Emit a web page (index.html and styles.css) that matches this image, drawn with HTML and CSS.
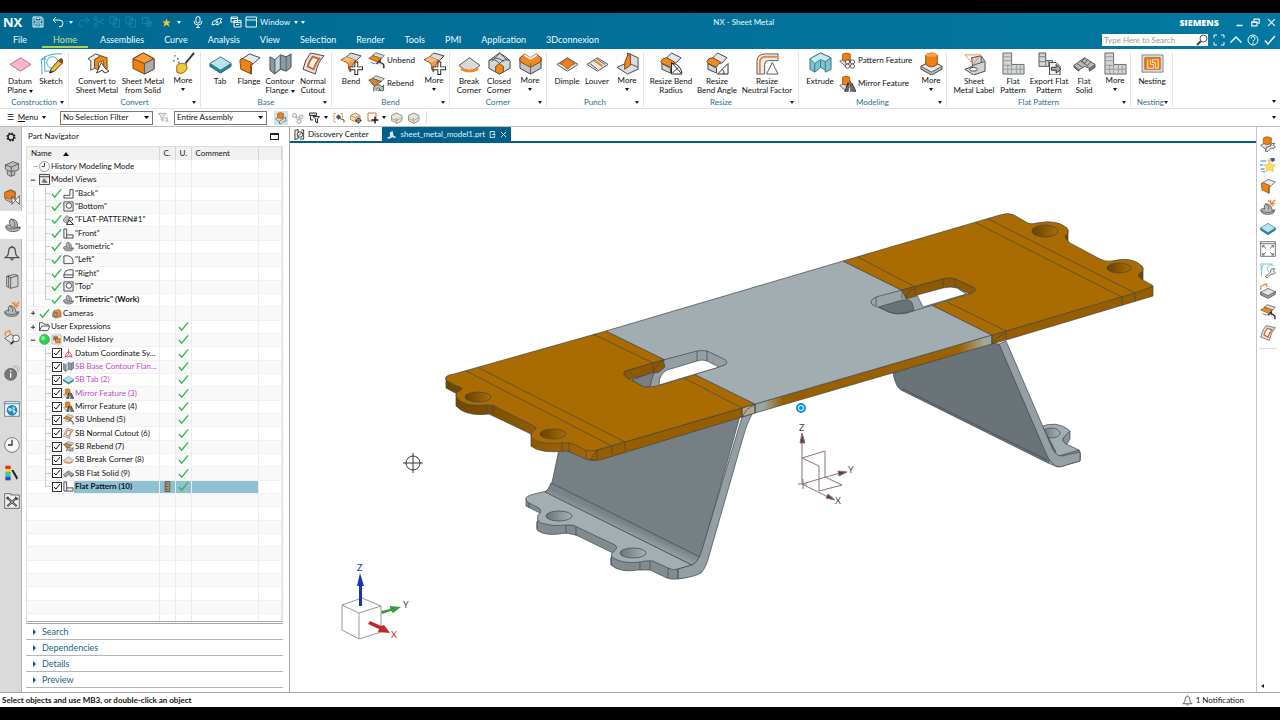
FILE: index.html
```
<!DOCTYPE html>
<html lang="en">
<head>
    <meta charset="UTF-8">
    <meta name="viewport" content="width=device-width, initial-scale=1.0">
    <title>NX - Sheet Metal</title>
    <link rel="stylesheet" href="styles.css">
</head>
<body>
    <!-- Shared icons, all on a 24 unit grid -->
    <svg class="sprite" aria-hidden="true">
        <symbol id="datum" viewBox="0 0 24 24"><path d="M1 13L12 6l11 7-11 7z" fill="#f7b6cf" stroke="#b5708f"/></symbol>
        <symbol id="sketch" viewBox="0 0 24 24"><g fill="none" stroke="#3ba6c4"><path d="M2 23Q2 10 1 8Q9 1 23 2M1 8l5-1M5 4v16h10"/><circle cx="13" cy="11" r="6"/></g><path d="M10 22l2-5L20 8l4 3-9 9z" fill="#f5b82e" stroke="#333"/><path d="M19 9l3-3 3 3-3 3z" fill="#8a4a2a"/><path d="M10 22l1-3 2 2z" fill="#222"/></symbol>
        <symbol id="convert" viewBox="0 0 24 24"><path d="M2 7l8-5 6 2-7 4v9l-4 2V9z" fill="#eee" stroke="#444"/><path d="M9 8l6-4 7 2v12l-4 3V9l-5 2v8l-4-2z" fill="#ef8a1d" stroke="#7a4a12"/><path d="M11 22l5-11 4 6 4 3-4 2-3-3z" fill="#fff" stroke="#333"/></symbol>
        <symbol id="solid" viewBox="0 0 24 24"><path d="M1 7l11-6 11 6v11l-10 5-12-6z" fill="#ee8012" stroke="#6b3f12"/><path d="M1 7l12 5 10-5-11-6z" fill="#f79a37" stroke="#6b3f12"/><path d="M13 12l10-5v11l-10 5z" fill="#b0aaa6" stroke="#555"/></symbol>
        <symbol id="broom" viewBox="0 0 24 24"><path d="M23 1l-9 11" stroke="#333" stroke-width="2"/><path d="M5 14q4-4 10-1 2 4-1 7-4 4-9 1z" fill="#f0c838" stroke="#87691d"/><g fill="#777"><circle cx="3" cy="4" r="1"/><circle cx="6" cy="7" r="1"/><circle cx="2" cy="9" r="1"/><circle cx="7" cy="11" r="1"/></g></symbol>
        <symbol id="tab" viewBox="0 0 24 24"><path d="M1 12l11 7 11-7v3l-11 7-11-7z" fill="#1f8aa0" stroke="#22616f"/><path d="M1 12l11-7 11 7-11 7z" fill="#b9e3ec" stroke="#347887"/></symbol>
        <symbol id="flange" viewBox="0 0 24 24"><path d="M3 8l9-6 11 4-8 7z" fill="#e6e8ea" stroke="#444"/><path d="M2 9q0-2 3-2l9 4q2 1 0 3v9L3 18z" fill="#ee8418" stroke="#7d4611"/><path d="M14 12l-1 3v8" fill="none" stroke="#7d4611"/></symbol>
        <symbol id="contour" viewBox="0 0 24 24"><path d="M1 5l5 3 6-5 6 2 5-3v14l-5 4-6-2-6 5-5-4z" fill="#8d9ba3" stroke="#3e4a50"/><path d="M6 8v15M12 3v15M18 5v15" stroke="#54626a"/><path d="M7 8l4-4v13l-4 4z" fill="#c8d2d7"/></symbol>
        <symbol id="cutout" viewBox="0 0 24 24"><path d="M9 1l14 3q-7 7-9 19L1 18Q3 8 9 1z" fill="#e3e3e3" stroke="#444"/><path d="M11 5l7 2q-4 5-6 11l-6-3q1-5 5-10z" fill="#fff" stroke="#d3602d" stroke-width="2"/></symbol>
        <symbol id="bend" viewBox="0 0 24 24"><path d="M6 6l5-5 11 3-6 6z" fill="#d9dcdd" stroke="#444"/><path d="M1 8l6-3 10 4-3 4q-3 3-3 8l-2-3q1-5-2-7z" fill="#ee9a48" stroke="#87501b"/><path d="M2 8l7 3 6-3-8-3z" fill="#f8bd79"/><path d="M17 10v14M10 17h14" stroke="#222" stroke-width="4"/><path d="M17 11v12M11 17h12" stroke="#fff" stroke-width="2"/></symbol>
        <symbol id="unbend" viewBox="0 0 24 24"><path d="M6 5l5-4 12 4-5 5z" fill="#d9dcdd" stroke="#444"/><path d="M1 9l6-4 12 4-6 5z" fill="#ee8a22" stroke="#7d4611"/><path d="M4 14l5 3 2-2" fill="none" stroke="#333"/><path d="M12 17l5-5v3q7 1 5 8" fill="#eee" stroke="#333" stroke-width="2"/></symbol>
        <symbol id="rebend" viewBox="0 0 24 24"><path d="M6 5l5-4 12 4-5 5z" fill="#d9dcdd" stroke="#444"/><path d="M1 7l6-2 12 4-5 3-2 5-5-3z" fill="#c9873e" stroke="#5e3914"/><path d="M8 23v-6q7-7 12 0l2-3v8h-8l3-2q-4-4-5 2" fill="#bbb" stroke="#333"/></symbol>
        <symbol id="breakc" viewBox="0 0 24 24"><path d="M1 14L12 6l11 8q-11 11-22 0z" fill="#d8dadb" stroke="#555"/><path d="M3 16q9 5 18 0v3q-9 5-18 0z" fill="#f08a22"/></symbol>
        <symbol id="closedc" viewBox="0 0 24 24"><path d="M1 9q4-3 11-8 7 4 11 8v8l-11 6-11-6z" fill="#d5d8da" stroke="#444"/><path d="M1 9q6-3 11 3 5-6 11-3M5 6q7 0 12 4M12 1q-2 3-8 9M12 1q5 4 8 8" fill="none" stroke="#555"/><path d="M8 15l4-3 4 3v6l-4 2-4-2z" fill="#ee8a1d" stroke="#7d4611"/></symbol>
        <symbol id="cmore" viewBox="0 0 24 24"><path d="M1 6l11 6 11-6v11l-11 6-11-6z" fill="#bfc3c5" stroke="#444"/><path d="M1 6l5-4 6 4 6-4 5 4v4l-11 6-11-6z" fill="#ee8a22" stroke="#7d4611"/><path d="M5 4l7 4 7-4-1-2-6 4-6-4z" fill="#eceeef"/><path d="M12 12v11" stroke="#666"/></symbol>
        <symbol id="dimple" viewBox="0 0 24 24"><path d="M1 13L12 6l11 7-11 7z" fill="#e6e6e6" stroke="#555"/><path d="M4 12q4-1 8-6 4 5 8 6-4 1-8 6-4-5-8-6z" fill="#f07e1b" stroke="#a75310"/></symbol>
        <symbol id="louver" viewBox="0 0 24 24"><path d="M1 13L12 6l11 7-11 7z" fill="#e8e8e8" stroke="#555"/><path d="M8 9l9 6M11 7l9 6M4 12l8 6" stroke="#555"/><path d="M8 9l2-1 8 6-2 1z" fill="#f08a22"/></symbol>
        <symbol id="pmore" viewBox="0 0 24 24"><path d="M12 1l11 5v12l-11 5-11-7 11-5z" fill="#dcdfe1" stroke="#444"/><path d="M12 11l11 5" stroke="#555"/><path d="M12 4l3-2v12l-6 4q-1-8 3-14z" fill="#ee8a22" stroke="#7d4611"/></symbol>
        <symbol id="rbr" viewBox="0 0 24 24"><path d="M7 6l5-5 10 5-6 6z" fill="#e2e4e5" stroke="#444"/><path d="M1 10q1-4 6-4l9 5q-4 1-5 5l-9-4z" fill="#f08a22" stroke="#7d4611"/><path d="M2 12l9 5v5l-9-4z" fill="#d0d2d3" stroke="#444"/><path d="M12 23V11l11 12z" fill="#fff" stroke="#222"/><path d="M12 12q9 0 11 10M13 22l6-6" fill="none" stroke="#222"/></symbol>
        <symbol id="rba" viewBox="0 0 24 24"><path d="M7 6l5-5 10 5-6 6z" fill="#e2e4e5" stroke="#444"/><path d="M1 10q1-4 6-4l9 5q-4 1-5 5l-9-4z" fill="#f08a22" stroke="#7d4611"/><path d="M2 12l9 5v5l-9-4z" fill="#d0d2d3" stroke="#444"/><path d="M12 23L23 12v11z" fill="#fff" stroke="#222"/><path d="M17 18q2 2 2 5" fill="none" stroke="#222"/></symbol>
        <symbol id="rnf" viewBox="0 0 24 24"><path d="M1 23V10q0-8 9-8h13v7H13q-4 0-4 4v10z" fill="#eee" stroke="#555"/><path d="M4 23V11q0-6 7-6h12" fill="none" stroke="#e98a3d" stroke-width="2"/><path d="M11 23l6-12 6 12z" fill="#fff" stroke="#555"/></symbol>
        <symbol id="extrude" viewBox="0 0 24 24"><path d="M1 7l11-6 11 5v12l-6 3v-2l-5-3-6 5-5-3z" fill="#7fc2d0" stroke="#39788a"/><path d="M1 7l11-6 11 5-6 4-5-2-6 4z" fill="#c7eaf0" stroke="#39788a"/><path d="M6 12v9M12 9v7M17 10v9" stroke="#39788a"/></symbol>
        <symbol id="boss" viewBox="0 0 24 24"><path d="M1 15l11-6 11 6v3l-11 6-11-6z" fill="#b8bcbe" stroke="#444"/><path d="M1 15l11-6 11 6-11 6z" fill="#e5e7e8" stroke="#555"/><path d="M6 3q6-4 12 0v10q-6 5-12 0z" fill="#ee7f14" stroke="#8c4b10"/><ellipse cx="12" cy="3" rx="6" ry="2" fill="#f8a445"/></symbol>
        <symbol id="patternf" viewBox="0 0 24 24"><path d="M1 13l8-5 8 5-8 7z" fill="#d8dadb" stroke="#444"/><path d="M5 3q5-3 11 0v9q-5 3-11 0z" fill="#ee7f14" stroke="#8c4b10"/><g fill="#fff" stroke="#222"><circle cx="12" cy="14" r="3"/><circle cx="19" cy="14" r="3"/><circle cx="12" cy="20" r="3"/><circle cx="19" cy="20" r="3"/></g></symbol>
        <symbol id="mirrorf" viewBox="0 0 24 24"><path d="M1 15l8-5 8 5-8 7z" fill="#d8dadb" stroke="#444"/><path d="M5 3q5-3 10 0v10q-5 3-10 0z" fill="#ee7f14" stroke="#8c4b10"/><path d="M8 23l5-12v12zM24 23l-6-12v12z" fill="#777" stroke="#111"/><path d="M16 8v16" stroke="#111"/></symbol>
        <symbol id="flatview" viewBox="0 0 24 24"><path d="M1 11l7-8 9 6v9l-9 2-7-4z" fill="#bbb" stroke="#333"/><path d="M8 23l5-10 10 10zM13 12a4 4 0 1 1 6 3" fill="#eee" stroke="#222" stroke-width="2"/></symbol>
        <symbol id="label" viewBox="0 0 24 24"><path d="M9 6l10-2 4 6v10l-12 4-9-6 8-3z" fill="#cfd3d5" stroke="#444"/><path d="M10 14l12-4M19 4v7" stroke="#555"/><ellipse cx="11" cy="18" rx="4" ry="2" fill="#fff" stroke="#444"/><path d="M2 3h16M2 3l9 10 7-10" fill="none" stroke="#e98a3d"/></symbol>
        <symbol id="flatp" viewBox="0 0 24 24"><path d="M1 1h9v12h13v10H1z" fill="#d3d6d8" stroke="#666"/><path d="M1 5h9M1 9h9M1 14h9M10 13v10M6 13v10M15 13v10M19 13v10M1 18h22" stroke="#999"/></symbol>
        <symbol id="exportfp" viewBox="0 0 24 24"><path d="M1 1h7v8h7v6H1z" fill="#d3d6d8" stroke="#555"/><path d="M1 5h7M8 9v6M1 10h7M11 9v6" stroke="#777"/><path d="M12 11h7l4 4v9H12z" fill="#f1f1f1" stroke="#444"/><path d="M14 16h5v-3l5 5-5 4v-3h-5z" fill="#aaa" stroke="#333"/></symbol>
        <symbol id="flatsolid" viewBox="0 0 24 24"><path d="M1 14l11-8 11 7-6 4-5-2-6 4z" fill="#b9bdc0" stroke="#555"/><path d="M4 12l6 4M8 9l8 6M12 6l-3 5M15 8l-4 5M19 10l-4 4" stroke="#555"/><path d="M1 14v2l5 4v-2M17 17v3l6-4v-3" fill="#777" stroke="#555"/></symbol>
        <symbol id="nesting" viewBox="0 0 24 24"><path d="M1 3h22v18H1z" fill="#d9d9d9" stroke="#888"/><path d="M4 6h16v12H4z" fill="#ee8418" stroke="#b0691d"/><path d="M10 8v5h3v4H7V8M15 8h3v9h-3v-6h-3V8z" fill="none" stroke="#fbe3c8"/></symbol>
        <symbol id="part" viewBox="0 0 24 24"><path d="M1 14q3-4 7-1Q5 5 9 3q11 0 10 13l4-1q0 7-12 7Q1 21 1 14z" fill="#b6b8b9" stroke="#333"/><path d="M9 3q8 4 5 12l5 1M1 15q8 6 22 0M8 13q1 4 6 2" fill="none" stroke="#444"/></symbol>
        <symbol id="tick" viewBox="0 0 24 24"><path d="M2 13l6 7L22 3" fill="none" stroke="#2cb84c" stroke-width="3"/></symbol>
        <symbol id="gear" viewBox="0 0 24 24"><circle cx="12" cy="12" r="9" fill="none" stroke="#222" stroke-width="4" stroke-dasharray="4 3"/><circle cx="12" cy="12" r="7" fill="none" stroke="#222" stroke-width="3"/></symbol>
        <symbol id="assembly" viewBox="0 0 24 24"><path d="M2 6l11-5 9 3v9l-6 3v5l-6 2-5-3v-6l-3-2z" fill="#bbbdbe" stroke="#333"/><path d="M2 6l9 3 11-5M11 9v6M5 14l6 2 5-2M11 15v8" fill="none" stroke="#333"/></symbol>
        <symbol id="constraint" viewBox="0 0 24 24"><path d="M2 5l8-4 7 3v11l-7 5-8-4z" fill="#bbb" stroke="#444"/><path d="M1 5l9-3 6 3v8l-7 2-8-2z" fill="#ef7c17" stroke="#8c4b10"/><path d="M12 11v12l5-6 6 6V10l-6 7z" fill="#fff" stroke="#222"/></symbol>
        <symbol id="bell" viewBox="0 0 24 24"><path d="M2 19q5-3 5-10 0-5 5-6 5 1 5 6 0 7 5 10zM10 20q2 5 4 0M12 3V1" fill="none" stroke="#555" stroke-width="2"/></symbol>
        <symbol id="book" viewBox="0 0 24 24"><path d="M4 5l12-3 5 2v16l-11 3-6-3z" fill="#d2d2d2" stroke="#333"/><path d="M4 5l6 2v16M10 7l11-3M7 4v17" fill="none" stroke="#333"/></symbol>
        <symbol id="partstar" viewBox="0 0 24 24"><path d="M1 16q3-3 6-1-2-6 2-8 9 1 9 10l4-1q0 7-10 7Q1 23 1 16z" fill="#b6b8b9" stroke="#333"/><path d="M9 7q6 4 4 9M1 17q8 6 20 1" fill="none" stroke="#444"/><path d="M12 2l3 3M16 1v6h7M23 1l-6 6M20 10l-4-3" stroke="#e98a3d" stroke-width="2" fill="none"/></symbol>
        <symbol id="platesearch" viewBox="0 0 24 24"><path d="M1 14l9-6 12 6-10 8z" fill="#e4e4e4" stroke="#333"/><path d="M2 5l7-3M2 5v5M9 2v5" stroke="#e98a3d" stroke-width="2"/><circle cx="18" cy="14" r="5" fill="#fff" stroke="#222"/><path d="M14 18l-4 5" stroke="#222" stroke-width="2"/></symbol>
        <symbol id="info" viewBox="0 0 24 24"><circle cx="10" cy="14" r="9" fill="#777" stroke="#555"/><path d="M10 12v7M10 8v2" stroke="#fff" stroke-width="2"/><path d="M13 2q8 1 9 9M16 0q7 1 8 8" fill="none" stroke="#999"/></symbol>
        <symbol id="web" viewBox="0 0 24 24"><path d="M1 1h22v22H1z" fill="#f0f5f7" stroke="#37576b"/><path d="M1 4h22" stroke="#37576b"/><circle cx="12" cy="14" r="8" fill="#2288b5"/><path d="M7 10l4 1 1 3-3 2-3-3M13 8l4 2-2 3 3 3-3 3-2-3" fill="#b4def2"/></symbol>
        <symbol id="clock" viewBox="0 0 24 24"><circle cx="12" cy="12" r="11" fill="#f5f5f5" stroke="#444"/><path d="M12 4v8H6" fill="none" stroke="#333" stroke-width="2"/></symbol>
        <symbol id="roles" viewBox="0 0 24 24"><path d="M2 1h8v5H2z" fill="#e8322b"/><path d="M2 6h8v4H2z" fill="#ffdf1c"/><path d="M2 10h8v4H2z" fill="#4fcf3f"/><path d="M2 14h8v4H2z" fill="#26b9e8"/><path d="M2 18h8v5H2z" fill="#2a4bd0"/><path d="M11 8l3-1 7 12-2 3z" fill="#222"/></symbol>
        <symbol id="tools" viewBox="0 0 24 24"><path d="M1 1h9v2h13v20H1z" fill="#eee" stroke="#333"/><path d="M5 7l14 13M19 7L5 20" stroke="#333" stroke-width="3"/><path d="M5 7l14 13M19 7L5 20" stroke="#ddd"/><path d="M3 7l3-2 2 3-3 2zM17 5l5 4-3 2-3-3z" fill="#444"/></symbol>
        <symbol id="wrenchboss" viewBox="0 0 24 24"><path d="M1 14l9-5 9 5-9 7z" fill="#d8dadb" stroke="#444"/><path d="M5 3q6-4 12 0v8q-6 4-12 0z" fill="#ee7f14" stroke="#8c4b10"/><path d="M8 23l2-6 6-2q0-5 6-4l-2 3 3 2q-1 4-6 2l-5 5z" fill="#eee" stroke="#222"/></symbol>
        <symbol id="wish" viewBox="0 0 24 24"><path d="M14 7l3 4 6 1-4 4 1 6-6-3-5 3 1-6-4-4 6-1z" fill="#ffe05a" stroke="#e3b93a"/><path d="M15 2l6-1 2 4-5 3z" fill="#3d57ac"/><path d="M11 4l5-1 1 4-6-1z" fill="#f2b28c"/><path d="M1 6h8M0 12h5M1 18h6M3 22h5" stroke="#6ba6e8" stroke-width="2"/></symbol>
        <symbol id="fit" viewBox="0 0 24 24"><path d="M1 1h22v22H1zM1 4h22" fill="#fff" stroke="#333"/><path d="M4 10V7h3M20 10V7h-3M4 18v3h3M20 18v3h-3M4 7l5 4M20 7l-5 4M4 21l5-4M20 21l-5-4" fill="none" stroke="#333"/></symbol>
        <symbol id="sketchwrench" viewBox="0 0 24 24"><path d="M2 22Q4 10 1 3h18M5 4l-4 8M21 6a6 6 0 1 0-8 9" fill="none" stroke="#3ba6c4"/><path d="M8 22l8-7q-1-6 6-5l-2 3 3 3q-2 3-6 2l-6 6z" fill="#eee" stroke="#333"/></symbol>
        <symbol id="plate" viewBox="0 0 24 24"><path d="M1 14v4l11 5 11-6v-4z" fill="#9ba0a3" stroke="#333"/><path d="M1 14l11-6 11 5-11 6z" fill="#e0e3e5" stroke="#444"/><path d="M1 5l9-4M1 5v5M10 1v5" stroke="#e98a3d" stroke-width="2"/></symbol>
        <symbol id="funnel" viewBox="0 0 24 24"><path d="M1 3h16l-6 8v9l-4-3v-6zM14 13h7v7h-5" fill="#eee" stroke="#aaa" stroke-width="2"/></symbol>
        <symbol id="link" viewBox="0 0 24 24"><g fill="#eee" stroke="#aaa" stroke-width="2"><path d="M7 8l10 6M7 9l6 10"/><circle cx="5" cy="7" r="4"/><circle cx="18" cy="10" r="4"/><circle cx="14" cy="19" r="4"/></g></symbol>
        <symbol id="sieve" viewBox="0 0 24 24"><path d="M1 2h14v5H1zM3 7v9h5M8 9h13l-4 5v8l-4-2v-6z" fill="#ddd" stroke="#333" stroke-width="2"/></symbol>
        <symbol id="snap" viewBox="0 0 24 24"><path d="M6 3H2v17h4M15 3h4v9" fill="none" stroke="#e9a05d" stroke-width="2"/><circle cx="11" cy="10" r="4" fill="#555"/><path d="M6 10h10M11 5v10M14 13l8 3v5" stroke="#555" stroke-width="2" fill="none"/></symbol>
        <symbol id="cubeplus" viewBox="0 0 24 24"><path d="M1 7l10-5 9 5v9l-9 4-10-5zM1 7l10 4 9-4M11 11v9" fill="#f8dcbf" stroke="#d28a4a" stroke-width="2"/><circle cx="17" cy="17" r="4" fill="#fff" stroke="#222" stroke-width="2"/><path d="M17 10v14M10 17h14" stroke="#222"/></symbol>
        <symbol id="rectplus" viewBox="0 0 24 24"><path d="M2 2h16v16H2z" fill="#fff" stroke="#d2752e" stroke-width="2"/><path d="M16 9v14M9 16h14" stroke="#222" stroke-width="3"/></symbol>
        <symbol id="paleCube" viewBox="0 0 24 24"><path d="M1 7l10-5 11 5v10l-10 6-11-6z" fill="#e8e2de" stroke="#9a9592" stroke-width="2"/><path d="M1 13l10 4 11-6M11 12v11" fill="none" stroke="#c0a08a" stroke-width="2"/></symbol>
        <symbol id="minus" viewBox="0 0 24 24"><path d="M5 11h14v3H5z" fill="#333"/></symbol>
        <symbol id="plus" viewBox="0 0 24 24"><path d="M3 3h18v18H3z" fill="#fff" stroke="#bbb"/><path d="M6 11h12v3H6zM11 6h3v12h-3z" fill="#333"/></symbol>
        <symbol id="viewset" viewBox="0 0 24 24"><path d="M1 1h22v22H1zM1 6h22" fill="#eee" stroke="#333" stroke-width="2"/><path d="M6 18q0-5 3-4V9q6 1 7 7l3 1q-1 5-13 1z" fill="#777"/></symbol>
        <symbol id="vback" viewBox="0 0 24 24"><path d="M2 16h13V3h7v19H2z" fill="#f4f4f4" stroke="#444" stroke-width="2"/></symbol>
        <symbol id="vbottom" viewBox="0 0 24 24"><path d="M2 2h20v20H2z" fill="#eee" stroke="#444" stroke-width="2"/><circle cx="13" cy="10" r="6" fill="#fff" stroke="#444" stroke-width="2"/></symbol>
        <symbol id="vfront" viewBox="0 0 24 24"><path d="M2 2h6v13h14v7H2zM8 15v7" fill="#f4f4f4" stroke="#444" stroke-width="2"/></symbol>
        <symbol id="vleft" viewBox="0 0 24 24"><path d="M2 21V4h10q9 2 10 11v6z" fill="#f4f4f4" stroke="#444" stroke-width="2"/></symbol>
        <symbol id="vright" viewBox="0 0 24 24"><path d="M2 21v-7Q5 4 12 4h10v17zM2 15h20" fill="#f4f4f4" stroke="#444" stroke-width="2"/></symbol>
        <symbol id="camera" viewBox="0 0 24 24"><path d="M6 6l12-3 4 5v11l-12 3-7-4z" fill="#e58a37" stroke="#5f4630"/><circle cx="9" cy="14" r="5" fill="#999" stroke="#444"/></symbol>
        <symbol id="folder" viewBox="0 0 24 24"><path d="M1 21V4h8l2 3h9v4M1 21l5-10h18l-5 10z" fill="#fff" stroke="#444" stroke-width="2"/></symbol>
        <symbol id="ball" viewBox="0 0 24 24"><circle cx="12" cy="12" r="11" fill="#2bd052" stroke="#178a34"/><circle cx="9" cy="9" r="5" fill="#7cec92"/></symbol>
        <symbol id="history" viewBox="0 0 24 24"><path d="M2 2h20v20H2z" fill="#f4e6da" stroke="#888"/><path d="M5 5h10v9H5z" fill="#8a6a4e"/><path d="M10 10h10v9H10z" fill="#f08a22" stroke="#7d4611"/></symbol>
        <symbol id="csys" viewBox="0 0 24 24"><path d="M12 2v12L3 21M12 14l9 7M12 7l-7 8v4h14v-4z" fill="none" stroke="#c7506e" stroke-width="2"/></symbol>
        <symbol id="save" viewBox="0 0 24 24"><path d="M2 2h17l3 3v17H2zM6 2v8h12V2M6 22v-8h12v8M9 5h6M9 18h6" fill="none" stroke="currentColor" stroke-width="2"/></symbol>
        <symbol id="undo" viewBox="0 0 24 24"><path d="M8 2L2 8l6 6M2 8h12q8 0 8 7t-8 7" fill="none" stroke="currentColor" stroke-width="2"/></symbol>
        <symbol id="redo" viewBox="0 0 24 24"><path d="M16 2l6 6-6 6M22 8H10q-8 0-8 7t8 7" fill="none" stroke="currentColor" stroke-width="2"/></symbol>
        <symbol id="cut" viewBox="0 0 24 24"><path d="M2 6l20 10M2 17L22 6" stroke="currentColor" stroke-width="2"/><g fill="none" stroke="currentColor" stroke-width="2"><circle cx="5" cy="5" r="3"/><circle cx="5" cy="19" r="3"/></g></symbol>
        <symbol id="copy" viewBox="0 0 24 24"><path d="M2 2h12v14H2zM9 7h12v15H9z" fill="none" stroke="currentColor" stroke-width="2"/></symbol>
        <symbol id="target" viewBox="0 0 24 24"><path d="M3 3h12v12H3zM15 8v14M8 15h14M11 11h9v9h-9z" fill="none" stroke="currentColor" stroke-width="2"/></symbol>
        <symbol id="star" viewBox="0 0 24 24"><path d="M12 1l3 8h9l-7 5 3 9-8-5-8 5 3-9-7-5h9z" fill="#ffc62e"/></symbol>
        <symbol id="mic" viewBox="0 0 24 24"><path d="M8 3q4-4 8 0v9q-4 5-8 0zM4 10q0 8 8 8t8-8M12 18v5M8 23h8" fill="none" stroke="currentColor" stroke-width="2"/></symbol>
        <symbol id="touch" viewBox="0 0 24 24"><path d="M2 18q-1-8 6-9l8-4 6 1-4 4 4 3-5 1-3 4-5-2z" fill="none" stroke="currentColor" stroke-width="2"/><circle cx="12" cy="12" r="2" fill="none" stroke="currentColor" stroke-width="2"/></symbol>
        <symbol id="windows" viewBox="0 0 24 24"><path d="M2 2h13v10H2zM2 5h13M8 9h14v13H8zM8 13h14M12 17h6" fill="none" stroke="currentColor" stroke-width="2"/></symbol>
        <symbol id="window" viewBox="0 0 24 24"><path d="M2 2h21v20H2zM2 8h21" fill="none" stroke="currentColor" stroke-width="2"/></symbol>
        <symbol id="restore" viewBox="0 0 24 24"><path d="M2 10h14v11H2zM2 12h14M8 8V3h14v11h-5" fill="none" stroke="currentColor" stroke-width="3"/></symbol>
        <symbol id="min" viewBox="0 0 24 24"><path d="M4 20h16" stroke="currentColor" stroke-width="4"/></symbol>
        <symbol id="close" viewBox="0 0 24 24"><path d="M3 3l18 18M21 3L3 21" stroke="currentColor" stroke-width="3"/></symbol>
        <symbol id="full" viewBox="0 0 24 24"><path d="M2 8V2h6M16 2h6v6M22 16v6h-6M8 22H2v-6" fill="none" stroke="currentColor" stroke-width="2"/></symbol>
        <symbol id="up" viewBox="0 0 24 24"><path d="M1 17L12 6l11 11" fill="none" stroke="currentColor" stroke-width="3"/></symbol>
        <symbol id="help" viewBox="0 0 24 24"><path d="M8 9q0-4 4-4t4 4q0 2-4 5v1M12 17v3" fill="none" stroke="currentColor" stroke-width="2"/><circle cx="12" cy="12" r="10" fill="none" stroke="currentColor" stroke-width="2"/></symbol>
        <symbol id="check" viewBox="0 0 24 24"><path d="M2 13l6 7L22 4" fill="none" stroke="currentColor" stroke-width="3"/></symbol>
        <symbol id="search" viewBox="0 0 24 24"><circle cx="15" cy="9" r="7" fill="#fff" stroke="#555" stroke-width="2"/><path d="M10 14l-8 8" stroke="#444" stroke-width="4"/></symbol>
        <symbol id="discovery" viewBox="0 0 24 24"><path d="M2 3l7-2v20l-7 2zM16 2h5v20h-8" fill="#eee" stroke="#333" stroke-width="2"/><circle cx="13" cy="12" r="6" fill="#fff" stroke="#333" stroke-width="2"/><path d="M9 16l8-8" stroke="#333" stroke-width="2"/></symbol>
        <symbol id="sheet" viewBox="0 0 24 24"><path d="M2 19l7-3-1-8 6-4 3 11 5 2-2 3-6-2-8 4z" fill="#d6e3ea"/></symbol>
        <symbol id="modified" viewBox="0 0 24 24"><path d="M19 7V2H4v20h15v-5M11 12h10M17 8l4 4-4 4" fill="none" stroke="currentColor" stroke-width="3"/></symbol>
        <symbol id="flag" viewBox="0 0 24 24"><path d="M7 1h10v22H7zM7 6h7M7 12h7M7 18h7" fill="#b59a68" stroke="#555" stroke-width="2"/></symbol>
    </svg>

    <header class="app-header">
        <div class="title-bar">
            <div class="quick-access">
                <strong class="logo">NX</strong>
                <button class="quick save" aria-label="Save"><svg><use href="#save"/></svg></button>
                <button class="quick" aria-label="Undo"><svg><use href="#undo"/></svg></button>
                <i class="caret"></i>
                <button class="quick dim" aria-label="Redo"><svg><use href="#redo"/></svg></button>
                <button class="quick dim" aria-label="Cut"><svg><use href="#cut"/></svg></button>
                <button class="quick dim" aria-label="Copy"><svg><use href="#copy"/></svg></button>
                <button class="quick dim" aria-label="Paste"><svg><use href="#copy"/></svg></button>
                <button class="quick dim" aria-label="Move"><svg><use href="#target"/></svg></button>
                <button class="quick star" aria-label="Favorites"><svg><use href="#star"/></svg></button>
                <i class="caret"></i>
                <div class="modes">
                    <button class="quick mode" aria-label="Voice"><svg><use href="#mic"/></svg></button>
                    <button class="quick mode" aria-label="Touch Mode"><svg><use href="#touch"/></svg></button>
                    <button class="quick mode" aria-label="Switch Window"><svg><use href="#windows"/></svg></button>
                </div>
                <button class="window-menu"><svg><use href="#window"/></svg>Window<i class="caret"></i></button>
                <i class="caret customize"></i>
            </div>
            <span class="title">NX - Sheet Metal</span>
            <div class="window-controls">
                <strong>SIEMENS</strong>
                <button aria-label="Minimize"><svg><use href="#min"/></svg></button>
                <button aria-label="Restore"><svg><use href="#restore"/></svg></button>
                <button aria-label="Close"><svg><use href="#close"/></svg></button>
            </div>
        </div>
        <div class="tab-row">
            <nav class="ribbon-tabs">
                <button>File</button>
                <button class="active">Home</button>
                <button>Assemblies</button>
                <button>Curve</button>
                <button>Analysis</button>
                <button>View</button>
                <button>Selection</button>
                <button>Render</button>
                <button>Tools</button>
                <button>PMI</button>
                <button>Application</button>
                <button>3Dconnexion</button>
            </nav>
            <div class="search-tools">
                <div class="search-box">
                    <input type="text" placeholder="Type Here to Search" aria-label="Search">
                    <svg><use href="#search"/></svg>
                </div>
                <button aria-label="Full Screen"><svg><use href="#full"/></svg></button>
                <button aria-label="Minimize Ribbon"><svg><use href="#up"/></svg></button>
                <button aria-label="Help"><svg><use href="#help"/></svg></button>
                <button aria-label="Tasks"><svg><use href="#check"/></svg></button>
            </div>
        </div>
    </header>

    <section class="ribbon">
        <div class="group construction">
            <div class="group-tools">
                <button class="tool"><svg><use href="#datum"/></svg><span>Datum<br>Plane <i class="caret"></i></span></button>
                <button class="tool"><svg><use href="#sketch"/></svg><span>Sketch</span></button>
            </div>
            <div class="group-name">Construction<i class="caret"></i></div>
        </div>
        <div class="group convert">
            <div class="group-tools">
                <button class="tool"><svg><use href="#convert"/></svg><span>Convert to<br>Sheet Metal</span></button>
                <button class="tool"><svg><use href="#solid"/></svg><span>Sheet Metal<br>from Solid</span></button>
                <button class="tool more"><svg><use href="#broom"/></svg><span>More</span><i class="caret"></i></button>
            </div>
            <div class="group-name">Convert<i class="caret"></i></div>
        </div>
        <div class="group base">
            <div class="group-tools">
                <button class="tool"><svg><use href="#tab"/></svg><span>Tab</span></button>
                <button class="tool"><svg><use href="#flange"/></svg><span>Flange</span></button>
                <button class="tool"><svg><use href="#contour"/></svg><span>Contour<br>Flange <i class="caret"></i></span></button>
                <button class="tool"><svg><use href="#cutout"/></svg><span>Normal<br>Cutout</span></button>
            </div>
            <div class="group-name">Base<i class="caret"></i></div>
        </div>
        <div class="group bending">
            <div class="group-tools">
                <button class="tool"><svg><use href="#bend"/></svg><span>Bend</span></button>
                <div class="tool-stack">
                    <button><svg><use href="#unbend"/></svg>Unbend</button>
                    <button><svg><use href="#rebend"/></svg>Rebend</button>
                </div>
                <button class="tool more"><svg><use href="#bend"/></svg><span>More</span><i class="caret"></i></button>
            </div>
            <div class="group-name">Bend<i class="caret"></i></div>
        </div>
        <div class="group corner">
            <div class="group-tools">
                <button class="tool"><svg><use href="#breakc"/></svg><span>Break<br>Corner</span></button>
                <button class="tool"><svg><use href="#closedc"/></svg><span>Closed<br>Corner</span></button>
                <button class="tool more"><svg><use href="#cmore"/></svg><span>More</span><i class="caret"></i></button>
            </div>
            <div class="group-name">Corner<i class="caret"></i></div>
        </div>
        <div class="group punch">
            <div class="group-tools">
                <button class="tool"><svg><use href="#dimple"/></svg><span>Dimple</span></button>
                <button class="tool"><svg><use href="#louver"/></svg><span>Louver</span></button>
                <button class="tool more"><svg><use href="#pmore"/></svg><span>More</span><i class="caret"></i></button>
            </div>
            <div class="group-name">Punch<i class="caret"></i></div>
        </div>
        <div class="group resize">
            <div class="group-tools">
                <button class="tool"><svg><use href="#rbr"/></svg><span>Resize Bend<br>Radius</span></button>
                <button class="tool"><svg><use href="#rba"/></svg><span>Resize<br>Bend Angle</span></button>
                <button class="tool"><svg><use href="#rnf"/></svg><span>Resize<br>Neutral Factor</span></button>
            </div>
            <div class="group-name">Resize<i class="caret"></i></div>
        </div>
        <div class="group modeling">
            <div class="group-tools">
                <button class="tool"><svg><use href="#extrude"/></svg><span>Extrude</span></button>
                <div class="tool-stack">
                    <button><svg><use href="#patternf"/></svg>Pattern Feature</button>
                    <button><svg><use href="#mirrorf"/></svg>Mirror Feature</button>
                </div>
                <button class="tool more"><svg><use href="#boss"/></svg><span>More</span><i class="caret"></i></button>
            </div>
            <div class="group-name">Modeling<i class="caret"></i></div>
        </div>
        <div class="group flat-pattern">
            <div class="group-tools">
                <button class="tool"><svg><use href="#label"/></svg><span>Sheet<br>Metal Label</span></button>
                <button class="tool"><svg><use href="#flatp"/></svg><span>Flat<br>Pattern</span></button>
                <button class="tool"><svg><use href="#exportfp"/></svg><span>Export Flat<br>Pattern</span></button>
                <button class="tool"><svg><use href="#flatsolid"/></svg><span>Flat<br>Solid</span></button>
                <button class="tool more"><svg><use href="#flatp"/></svg><span>More</span><i class="caret"></i></button>
            </div>
            <div class="group-name">Flat Pattern<i class="caret"></i></div>
        </div>
        <div class="group nest">
            <div class="group-tools">
                <button class="tool"><svg><use href="#nesting"/></svg><span>Nesting</span></button>
            </div>
            <div class="group-name">Nesting<i class="caret"></i></div>
        </div>
        <i class="caret ribbon-caret"></i>
    </section>

    <section class="selection-bar">
        <button class="menu-button"><span class="burger">☰</span><span><u>M</u>enu</span><i class="caret"></i></button>
        <select aria-label="Selection filter"><option>No Selection Filter</option></select>
        <svg><use href="#funnel"/></svg>
        <select aria-label="Selection scope"><option>Entire Assembly</option></select>
        <div class="bar-icons">
            <button class="on" aria-label="Highlight"><svg><use href="#wrenchboss"/></svg></button>
            <button aria-label="Link"><svg><use href="#link"/></svg></button>
            <button aria-label="Filter"><svg><use href="#sieve"/></svg><i class="caret"></i></button>
            <button aria-label="Snap"><svg><use href="#snap"/></svg></button>
            <button aria-label="Body"><svg><use href="#cubeplus"/></svg></button>
            <button aria-label="Rectangle"><svg><use href="#rectplus"/></svg><i class="caret"></i></button>
            <button aria-label="Shaded"><svg><use href="#paleCube"/></svg></button>
            <button aria-label="Edges"><svg><use href="#paleCube"/></svg></button>
        </div>
        <i class="caret bar-caret"></i>
    </section>

    <main class="workspace">
        <nav class="resource-bar">
            <button class="settings" aria-label="Settings"><svg><use href="#gear"/></svg></button>
            <button aria-label="Assembly Navigator"><svg><use href="#assembly"/></svg></button>
            <button aria-label="Constraint Navigator"><svg><use href="#constraint"/></svg></button>
            <button class="active" aria-label="Part Navigator"><svg><use href="#part"/></svg></button>
            <button aria-label="Notifications"><svg><use href="#bell"/></svg></button>
            <button aria-label="Reuse Library"><svg><use href="#book"/></svg></button>
            <button aria-label="View Manager"><svg><use href="#partstar"/></svg></button>
            <button aria-label="Inspect"><svg><use href="#platesearch"/></svg></button>
            <button class="apart" aria-label="Information"><svg><use href="#info"/></svg></button>
            <button class="apart" aria-label="Web Browser"><svg><use href="#web"/></svg></button>
            <button class="apart" aria-label="History"><svg><use href="#clock"/></svg></button>
            <button aria-label="Roles"><svg><use href="#roles"/></svg></button>
            <button aria-label="Tools"><svg><use href="#tools"/></svg></button>
        </nav>

        <aside class="navigator">
            <div class="navigator-title"><span>Part Navigator</span><button aria-label="Undock"></button></div>
            <div class="tree-wrap">
                <table class="tree">
                    <colgroup><col class="col-name"><col class="col-flag"><col class="col-flag"><col class="col-comment"><col></colgroup>
                    <thead>
                        <tr><th>Name<i class="sort"></i></th><th>C.</th><th>U.</th><th>Comment</th><th></th></tr>
                    </thead>
                    <tbody>
                        <tr><td><div class="node"><i class="toggle root"></i><svg><use href="#clock"/></svg><span>History Modeling Mode</span></div></td><td></td><td></td><td></td><td></td></tr>
                        <tr><td><div class="node"><svg class="toggle"><use href="#minus"/></svg><svg><use href="#viewset"/></svg><span>Model Views</span></div></td><td></td><td></td><td></td><td></td></tr>
                        <tr><td><div class="node"><i class="trunk line"></i><i class="branch"></i><svg><use href="#tick"/></svg><svg><use href="#vback"/></svg><span>"Back"</span></div></td><td></td><td></td><td></td><td></td></tr>
                        <tr><td><div class="node"><i class="trunk line"></i><i class="branch"></i><svg><use href="#tick"/></svg><svg><use href="#vbottom"/></svg><span>"Bottom"</span></div></td><td></td><td></td><td></td><td></td></tr>
                        <tr><td><div class="node"><i class="trunk line"></i><i class="branch"></i><svg><use href="#tick"/></svg><svg><use href="#flatview"/></svg><span>"FLAT-PATTERN#1"</span></div></td><td></td><td></td><td></td><td></td></tr>
                        <tr><td><div class="node"><i class="trunk line"></i><i class="branch"></i><svg><use href="#tick"/></svg><svg><use href="#vfront"/></svg><span>"Front"</span></div></td><td></td><td></td><td></td><td></td></tr>
                        <tr><td><div class="node"><i class="trunk line"></i><i class="branch"></i><svg><use href="#tick"/></svg><svg><use href="#part"/></svg><span>"Isometric"</span></div></td><td></td><td></td><td></td><td></td></tr>
                        <tr><td><div class="node"><i class="trunk line"></i><i class="branch"></i><svg><use href="#tick"/></svg><svg><use href="#vleft"/></svg><span>"Left"</span></div></td><td></td><td></td><td></td><td></td></tr>
                        <tr><td><div class="node"><i class="trunk line"></i><i class="branch"></i><svg><use href="#tick"/></svg><svg><use href="#vright"/></svg><span>"Right"</span></div></td><td></td><td></td><td></td><td></td></tr>
                        <tr><td><div class="node"><i class="trunk line"></i><i class="branch"></i><svg><use href="#tick"/></svg><svg><use href="#vbottom"/></svg><span>"Top"</span></div></td><td></td><td></td><td></td><td></td></tr>
                        <tr><td><div class="node"><i class="trunk line"></i><i class="branch last"></i><svg><use href="#tick"/></svg><svg><use href="#part"/></svg><strong>"Trimetric" (Work)</strong></div></td><td></td><td></td><td></td><td></td></tr>
                        <tr><td><div class="node"><svg class="toggle"><use href="#plus"/></svg><svg><use href="#tick"/></svg><svg><use href="#camera"/></svg><span>Cameras</span></div></td><td></td><td></td><td></td><td></td></tr>
                        <tr><td><div class="node"><svg class="toggle"><use href="#plus"/></svg><svg><use href="#folder"/></svg><span>User Expressions</span></div></td><td></td><td><svg><use href="#tick"/></svg></td><td></td><td></td></tr>
                        <tr><td><div class="node"><svg class="toggle"><use href="#minus"/></svg><svg><use href="#ball"/></svg><svg><use href="#history"/></svg><span>Model History</span></div></td><td></td><td><svg><use href="#tick"/></svg></td><td></td><td></td></tr>
                        <tr><td><div class="node"><i class="trunk"></i><i class="branch"></i><input type="checkbox" id="f0" checked><svg><use href="#csys"/></svg><label for="f0">Datum Coordinate Sy...</label></div></td><td></td><td><svg><use href="#tick"/></svg></td><td></td><td></td></tr>
                        <tr><td><div class="node pink"><i class="trunk"></i><i class="branch"></i><input type="checkbox" id="f1" checked><svg><use href="#contour"/></svg><label for="f1">SB Base Contour Flan...</label></div></td><td></td><td><svg><use href="#tick"/></svg></td><td></td><td></td></tr>
                        <tr><td><div class="node pink"><i class="trunk"></i><i class="branch"></i><input type="checkbox" id="f2" checked><svg><use href="#tab"/></svg><label for="f2">SB Tab (2)</label></div></td><td></td><td><svg><use href="#tick"/></svg></td><td></td><td></td></tr>
                        <tr><td><div class="node pink"><i class="trunk"></i><i class="branch"></i><input type="checkbox" id="f3" checked><svg><use href="#mirrorf"/></svg><label for="f3">Mirror Feature (3)</label></div></td><td></td><td><svg><use href="#tick"/></svg></td><td></td><td></td></tr>
                        <tr><td><div class="node"><i class="trunk"></i><i class="branch"></i><input type="checkbox" id="f4" checked><svg><use href="#mirrorf"/></svg><label for="f4">Mirror Feature (4)</label></div></td><td></td><td><svg><use href="#tick"/></svg></td><td></td><td></td></tr>
                        <tr><td><div class="node"><i class="trunk"></i><i class="branch"></i><input type="checkbox" id="f5" checked><svg><use href="#unbend"/></svg><label for="f5">SB Unbend (5)</label></div></td><td></td><td><svg><use href="#tick"/></svg></td><td></td><td></td></tr>
                        <tr><td><div class="node"><i class="trunk"></i><i class="branch"></i><input type="checkbox" id="f6" checked><svg><use href="#cutout"/></svg><label for="f6">SB Normal Cutout (6)</label></div></td><td></td><td><svg><use href="#tick"/></svg></td><td></td><td></td></tr>
                        <tr><td><div class="node"><i class="trunk"></i><i class="branch"></i><input type="checkbox" id="f7" checked><svg><use href="#rebend"/></svg><label for="f7">SB Rebend (7)</label></div></td><td></td><td><svg><use href="#tick"/></svg></td><td></td><td></td></tr>
                        <tr><td><div class="node"><i class="trunk"></i><i class="branch"></i><input type="checkbox" id="f8" checked><svg><use href="#breakc"/></svg><label for="f8">SB Break Corner (8)</label></div></td><td></td><td><svg><use href="#tick"/></svg></td><td></td><td></td></tr>
                        <tr><td><div class="node"><i class="trunk"></i><i class="branch"></i><input type="checkbox" id="f9" checked><svg><use href="#flatsolid"/></svg><label for="f9">SB Flat Solid (9)</label></div></td><td></td><td><svg><use href="#tick"/></svg></td><td></td><td></td></tr>
                        <tr class="selected"><td><div class="node"><i class="trunk"></i><i class="branch last"></i><input type="checkbox" id="f10" checked><svg><use href="#vfront"/></svg><label for="f10">Flat Pattern (10)</label></div></td><td><svg><use href="#flag"/></svg></td><td><svg><use href="#tick"/></svg></td><td></td><td></td></tr>
                        <tr><td></td><td></td><td></td><td></td><td></td></tr>
                        <tr><td></td><td></td><td></td><td></td><td></td></tr>
                        <tr><td></td><td></td><td></td><td></td><td></td></tr>
                        <tr><td></td><td></td><td></td><td></td><td></td></tr>
                        <tr><td></td><td></td><td></td><td></td><td></td></tr>
                        <tr><td></td><td></td><td></td><td></td><td></td></tr>
                        <tr><td></td><td></td><td></td><td></td><td></td></tr>
                        <tr><td></td><td></td><td></td><td></td><td></td></tr>
                        <tr><td></td><td></td><td></td><td></td><td></td></tr>
                        <tr><td></td><td></td><td></td><td></td><td></td></tr>
                    </tbody>
                </table>
            </div>
            <div class="sections">
                <button>Search</button>
                <button>Dependencies</button>
                <button>Details</button>
                <button>Preview</button>
            </div>
        </aside>

        <section class="document">
            <div class="document-tabs">
                <button><svg><use href="#discovery"/></svg>Discovery Center</button>
                <button class="active"><svg><use href="#sheet"/></svg>sheet_metal_model1.prt<svg class="small"><use href="#modified"/></svg><svg class="small"><use href="#close"/></svg></button>
            </div>
            <svg class="viewport" viewBox="290 143 966 549" role="img" aria-label="Sheet metal model">
                <defs>
                    <linearGradient id="lobe" x1="0" x2="1"><stop offset="0" stop-color="#6f4500"/><stop offset=".5" stop-color="#a76a06"/><stop offset="1" stop-color="#7b4d02"/></linearGradient>
                    <linearGradient id="edge" gradientUnits="userSpaceOnUse" x1="755" y1="0" x2="992" y2="0"><stop offset="0" stop-color="#9aa5a7"/><stop offset=".04" stop-color="#a0a397"/><stop offset=".12" stop-color="#975f00"/><stop offset=".86" stop-color="#9a6200"/><stop offset=".97" stop-color="#a5a795"/><stop offset="1" stop-color="#9ba6a8"/></linearGradient>
                    <linearGradient id="roll" gradientUnits="userSpaceOnUse" x1="625" y1="523" x2="619" y2="536"><stop offset="0" stop-color="#7a8387"/><stop offset="1" stop-color="#a5b1b4"/></linearGradient>
                    <linearGradient id="hole" x1="0" x2="1"><stop offset="0" stop-color="#684100"/><stop offset="1" stop-color="#a96c08"/></linearGradient>
                    <linearGradient id="greyhole" x1="0" x2="1"><stop offset="0" stop-color="#69747a"/><stop offset="1" stop-color="#a8b2b6"/></linearGradient>
                </defs>
                <g class="solid-lines">
                    <!-- right leg and foot -->
                    <path d="M1040 427Q1056 420 1069 430Q1071 434 1064 437Q1061 441 1066 444L1079 450Q1081 452 1080 461L1058 467L1048 463z" fill="#a2adb1"/>
                    <ellipse cx="1051" cy="433" rx="9" ry="5" fill="url(#greyhole)"/>
                    <path d="M1070 431v8l-3 5Q1061 441 1064 437zM1055 457L1079 450V461L1062 466z" fill="#89949a"/>
                    <path d="M1075 452v10"/>
                    <path d="M893 373Q896 389 903 391L1048 463 1056 452 999 344 990 343z" fill="#6a7377"/>
                    <path d="M903 389L1047 460"/>
                    <path d="M999 344L1006 341 1050 443Q1055 457 1062 456L1080 452V461L1060 467Q1051 467 1045 451z" fill="#949fa6"/>
                    <!-- left leg and foot -->
                    <path d="M561 440L553 478Q551 488 545 492L692 567 701 556 740 416z" fill="#767f83"/>
                    <path d="M526 498V506L540 513 537 523V530Q545 537 566 533L576 535 613 553 611 558V565Q620 573 638 570L650 570 667 578Q674 581 690 576L695 564 650 540z" fill="#818c91"/>
                    <path d="M526 498Q527 495 545 491.500L692 565 678 569Q673 571 668 568L653 561Q648 560 640 562Q625 564 615 559Q609 556 613 552Q619 548 615 545L579 528Q574 524 567 525Q553 527 541 523Q536 520 538 515Q543 512 539 508L529 503Q525 501 526 498z" fill="#a3aeb2"/>
                    <path d="M551 483Q549 490 545 492L692 565Q698 562 700 557z" fill="url(#roll)"/>
                    <path d="M742 417L752 414Q746 425 742 441L709 556Q706 568 701 573Q694 577 678 579V569L692 565Q698 562 701 553z" fill="#939fa4"/>
                    <path d="M566 525v9M576 527v9M640 562v8M650 561v9M668 568v10M678 569v10M529 503v5M611 557v8M537 521v8"/>
                    <ellipse cx="559" cy="516" rx="13" ry="5" fill="url(#greyhole)"/>
                    <ellipse cx="633" cy="553" rx="13" ry="5" fill="url(#greyhole)"/>
                    <!-- plate thickness -->
                    <path d="M446 377V388L461 396 456 394V406Q466 417 489 414L531 434V446Q540 454 567 451L586 459Q592 462 600 459L742 416 755 413V404L600 440 500 390z" fill="url(#lobe)"/>
                    <path d="M597 450L742 408V417L600 460 590 460z" fill="#965e00"/>
                    <path d="M755 404L992 335V344L755 413z" fill="url(#edge)"/>
                    <path d="M992 335L1153 286V296L1006 340 992 344z" fill="#965e00"/>
                    <path d="M742 408L755 404V413L742 417z" fill="#b5a98c"/>
                    <path d="M1068 230V242L1062 238zM1143 268V280L1137 276z" fill="#6c4500"/>
                    <!-- top skin -->
                    <path d="M446 377Q447 375 454 374L606 331 755 404 742 408 597 450Q590 452 585 450L573 444Q569 442 562 443Q541 445 533 439Q528 434 536 429Q537 427 532 425L498 408Q493 404 486 405Q464 407 457 398Q454 393 461 390Q464 388 457 386L447 381Q445 379 446 377z" fill="#aa6c00"/>
                    <path d="M606 331L843 261 992 335 755 404z" fill="#a1adb0"/>
                    <path d="M843 261L1000 215Q1008 212 1014 215L1026 222Q1030 225 1037 223Q1057 219 1067 228Q1070 233 1065 236Q1065 239 1070 243L1100 259Q1105 262 1112 261Q1132 256 1142 266Q1145 271 1139 274Q1137 276 1141 279L1152 285Q1154 286 1151 287L1135 293 1006 331 992 335z" fill="#aa6c00"/>
                    <path d="M466 371L612 446v9M479 368L625 442v9M593 334L653 363M742 408L684 378M742 408v9M755 404v9M988 219L1135 293v9M976 223L1122 297v9M858 257L915 287M947 302L1006 331v9M992 335v9"/>
                    <path d="M487 405v8M493 405v9M562 443v8M569 443v9M586 450v9M597 450v10"/>
                    <path d="M743 417Q744 409 755 405M993 343Q996 337 1005 333"/>
                    <ellipse cx="478" cy="397" rx="13" ry="5" fill="url(#hole)"/>
                    <ellipse cx="553" cy="434" rx="13" ry="5" fill="url(#hole)"/>
                    <ellipse cx="1045" cy="231" rx="13" ry="6" fill="url(#hole)"/>
                    <ellipse cx="1119" cy="268" rx="12" ry="5" fill="url(#hole)"/>
                    <!-- slots -->
                    <path d="M624 372Q624 371 629 370L663 360 697 351Q702 350 707 351L724 359Q729 362 725 365L657 386Q648 388 643 386L627 378Q623 376 624 372z" fill="#949fa4"/>
                    <path d="M624 372L629 370 663 360 665 367 659 372 630 379Q623 376 624 372z" fill="#8d5800"/>
                    <path d="M632 380L654 372 650 386Q646 388 642 386z" fill="#777f83"/>
                    <path d="M659 385Q659 374 667 370L697 361Q702 359 707 361L719 367z" fill="#fff"/>
                    <path d="M653 364V372M697 351v10M707 351v10M653 373Q657 362 665 360"/>
                    <path d="M871 302Q871 299 876 297L902 290 943 279Q949 277 955 279L973 287Q978 290 972 293L907 313Q896 315 889 312L873 305Q871 304 871 302z" fill="#9aa5a9"/>
                    <path d="M902 290L943 279Q949 277 955 279L973 287Q978 290 970 294L958 288Q950 286 943 288L906 299z" fill="#8f5900"/>
                    <path d="M879 307L899 301Q910 298 912 303L914 310 905 313Q896 315 889 312z" fill="#697277"/>
                    <path d="M923 307L917 295 943 288Q950 286 957 288L966 294z" fill="#fff"/>
                    <path d="M902 290v9M915 287v8M943 279v9M955 279v9M876 297v8M906 298Q908 289 915 289"/>
                </g>
                <!-- selected origin -->
                <circle cx="801" cy="408" r="4" fill="#d9f1ff" stroke="#168fe0" stroke-width="2"/>
                <circle cx="801" cy="408" r="2" fill="#168fe0"/>
                <!-- datum csys -->
                <g class="csys-lines">
                    <path d="M802 484V440M802 484L840 473M802 484L830 498M802 458L825 451V477L842 485 819 491V466L802 458M798 484h9M803 479v10"/>
                    <path d="M800 443l2-10 3 10zM838 471l9 1-8 4zM828 494l7 6-9-2z" fill="#5d4548"/>
                </g>
                <g class="axis-labels">
                    <text x="799" y="431">Z</text><text x="848" y="473">Y</text><text x="835" y="504">X</text>
                </g>
                <!-- view triad -->
                <path d="M342 605L362 598 381 606V632L359 639 342 630zM342 605L359 613 381 606M359 613V639" fill="#fff" stroke="#999"/>
                <path d="M359 606V586H357L360 573 364 586H362V606z" fill="#1638ad"/>
                <path d="M381 611L390 609V606L401 607 393 613 391 611 382 614z" fill="#3b9a3f"/>
                <path d="M370 621L381 626 384 625 390 633 378 632 379 629 368 624z" fill="#c0282c"/>
                <g class="axis-labels">
                    <text x="357" y="571" class="z">Z</text><text x="403" y="608">Y</text><text x="391" y="638" class="x">X</text>
                </g>
                <!-- cursor -->
                <path d="M403 463h20M413 453v20M406 463a7 7 0 1 0 14 0a7 7 0 1 0-14 0" fill="none" stroke="#333"/>
            </svg>
        </section>

        <aside class="side-tools">
            <div class="side-list">
                <button aria-label="Edit Feature"><svg><use href="#wrenchboss"/></svg></button>
                <button aria-label="Wish"><svg><use href="#wish"/></svg></button>
                <button aria-label="Flange"><svg><use href="#flange"/></svg></button>
                <button aria-label="New Part"><svg><use href="#partstar"/></svg></button>
                <button aria-label="Tab"><svg><use href="#tab"/></svg></button>
                <button aria-label="Fit"><svg><use href="#fit"/></svg></button>
                <button aria-label="Edit Sketch"><svg><use href="#sketchwrench"/></svg></button>
                <button aria-label="Measure"><svg><use href="#plate"/></svg></button>
                <button aria-label="Unbend"><svg><use href="#unbend"/></svg></button>
                <button aria-label="Normal Cutout"><svg><use href="#cutout"/></svg></button>
            </div>
            <i class="collapse"></i>
        </aside>
    </main>

    <footer class="status-bar">
        <strong>Select objects and use MB3, or double-click an object</strong>
        <button><svg><use href="#bell"/></svg>1 Notification</button>
    </footer>
</body>
</html>
```
FILE: styles.css
```
* {
    box-sizing: border-box;
}

body {
    display: flex;
    flex-direction: column;
    height: 100vh;
    margin: 0;
    padding: 13px 0;
    overflow: hidden;
    background-color: #000;
    color: #111;
    font-family: Lato, "Open Sans", sans-serif;
    font-size: 8px;
    line-height: 9px;
}

button, input, select {
    margin: 0;
    padding: 0;
    border: none;
    background: none;
    color: inherit;
    font: inherit;
}

button {
    display: flex;
    align-items: center;
    justify-content: center;
    white-space: nowrap;
}

svg {
    flex: none;
    display: block;
}

.sprite {
    position: absolute;
    width: 0;
    height: 0;
}

.caret {
    display: inline-block;
    flex: none;
    border: 2px solid transparent;
    border-top: 3px solid currentColor;
    border-bottom: none;
}

/* Title bar and ribbon tabs */
.app-header {
    flex: none;
    background: linear-gradient(to right, #006a91, #0378a1);
    color: #f0fafd;
}

.title-bar {
    display: grid;
    grid-template-columns: 308px 1fr auto;
    align-items: center;
    height: 18px;
}

.quick-access, .modes, .window-controls, .search-tools, .ribbon-tabs {
    display: flex;
    align-items: center;
}

.logo {
    width: 31px;
    padding-left: 3px;
    color: #fff;
    font-family: "Open Sans", sans-serif;
    font-size: 13px;
}

.quick {
    width: 16px;
    height: 16px;
}

.quick svg, .window-menu svg, .search-tools svg {
    width: 12px;
    height: 12px;
}

.quick.dim {
    color: #2180a4;
}

.quick.star {
    margin-left: 4px;
}

.quick.star svg {
    width: 9px;
    height: 9px;
}

.quick.save {
    margin-right: 4px;
}

.modes {
    margin-left: 4px;
}

.quick.mode {
    width: 19px;
}

.quick-access > .caret {
    margin: 0 3px;
}

.window-menu {
    gap: 3px;
}

.window-menu .caret {
    margin-left: 1px;
}

.title {
    text-align: center;
}

.window-controls {
    gap: 7px;
    padding-right: 4px;
}

.window-controls strong {
    margin-right: 9px;
    color: #fff;
    font-family: "Open Sans", sans-serif;
    font-size: 9px;
    font-weight: 800;
}

.window-controls svg {
    width: 9px;
    height: 9px;
}

.tab-row {
    display: flex;
    justify-content: space-between;
    height: 18px;
}

.ribbon-tabs {
    gap: 10px;
    padding-left: 8px;
    font-size: 9px;
}

.ribbon-tabs button {
    height: 16px;
    padding: 0 5px;
    border-bottom: 2px solid transparent;
}

.ribbon-tabs .active {
    margin-right: -3px;
    padding: 0 11px;
    border-bottom-color: #a9cf5a;
    color: #c9e58a;
}

.search-tools {
    gap: 5px;
    padding-right: 4px;
}

.search-box {
    display: flex;
    align-items: center;
    width: 106px;
    height: 12px;
    background-color: #fff;
}

.search-box input {
    flex: 1;
    min-width: 0;
    padding-left: 2px;
    color: #333;
}

.search-box input::placeholder {
    color: #999;
}

/* Ribbon */
.ribbon {
    flex: none;
    display: flex;
    align-items: stretch;
    height: 60px;
    padding: 3px 0 1px;
    border-bottom: 1px solid #e2e2e2;
    background-color: #fff;
}

.group {
    flex: none;
    display: flex;
    flex-direction: column;
    justify-content: space-between;
    border-right: 1px solid #e2e2e2;
    padding-left: 4px;
}

.group-tools {
    display: grid;
}

.construction { width: 69px; }
.construction .group-tools { grid-template-columns: 32px 30px; }
.convert { width: 132px; }
.convert .group-tools { grid-template-columns: 48px 44px 36px; }
.base { width: 131px; }
.base .group-tools { grid-template-columns: 30px 28px 34px 32px; }
.bending { width: 118px; }
.bending .group-tools { grid-template-columns: 30px 52px 32px; }
.corner { width: 97px; }
.corner .group-tools { grid-template-columns: 30px 30px 32px; }
.punch { width: 97px; }
.punch .group-tools { grid-template-columns: 32px 28px 32px; }
.resize { width: 155px; }
.resize .group-tools { grid-template-columns: 46px 46px 54px; }
.modeling { width: 148px; }
.modeling .group-tools { grid-template-columns: 34px 78px 32px; }
.flat-pattern { width: 184px; }
.flat-pattern .group-tools { grid-template-columns: 46px 32px 40px 30px 32px; }
.nest { width: 42px; }
.nest .group-tools { grid-template-columns: 34px; }

.tool {
    flex-direction: column;
    justify-content: flex-start;
    gap: 2px;
}

.tool svg {
    width: 23px;
    height: 23px;
}

.tool.more {
    gap: 1px;
}

.tool.more .caret {
    margin-top: 2px;
}

.tool-stack {
    display: flex;
    flex-direction: column;
    gap: 6px;
}

.tool-stack button {
    justify-content: flex-start;
    gap: 2px;
    padding-left: 2px;
}

.tool-stack svg {
    width: 17px;
    height: 17px;
}

.group-name {
    display: flex;
    align-items: center;
    height: 10px;
    color: #286f8e;
    justify-content: center;
}

.group-name .caret {
    margin-left: auto;
    margin-right: 4px;
    color: #222;
}

.group-name::before {
    content: "";
    margin-right: auto;
    width: 4px;
}

.ribbon-caret {
    align-self: flex-end;
    margin: 0 4px 4px auto;
}

/* Selection bar */
.selection-bar {
    flex: none;
    display: flex;
    align-items: center;
    height: 18px;
    border-bottom: 1px solid #bdbdbd;
    background-color: #fff;
}

.menu-button {
    gap: 4px;
    width: 53px;
    margin-right: 7px;
}

.selection-bar select {
    appearance: none;
    width: 93px;
    height: 14px;
    padding-left: 2px;
    border: 1px solid #777;
    background: #fff url("data:image/svg+xml,%3Csvg xmlns='http://www.w3.org/2000/svg' width='5' height='3'%3E%3Cpath d='M0 0h5L2.500 3z'/%3E%3C/svg%3E") no-repeat right 3px center;
}

.selection-bar > svg {
    width: 11px;
    height: 11px;
    margin: 0 5px;
}

.bar-icons {
    display: flex;
    align-items: center;
    gap: 3px;
    height: 13px;
    margin-left: 7px;
    padding-right: 5px;
    border-right: 1px solid #ddd;
}

.bar-icons button {
    gap: 3px;
    height: 14px;
    padding: 0 1px;
}

.bar-icons .on {
    background-color: #cde5ee;
}

.bar-icons svg {
    width: 12px;
    height: 12px;
}

.bar-caret {
    margin: 0 4px 0 auto;
}

/* Workspace */
.workspace {
    flex: 1;
    min-height: 0;
    display: flex;
    background-color: #fff;
}

.resource-bar {
    flex: none;
    width: 22px;
    border-right: 1px solid #b5b5b5;
    background-color: #dadada;
}

.resource-bar button {
    width: 21px;
    height: 28px;
    padding-left: 3px;
}

.resource-bar .settings {
    height: 20px;
    margin-bottom: 8px;
    padding: 0;
}

.resource-bar .settings svg {
    width: 10px;
    height: 10px;
}

.resource-bar .apart {
    margin-top: 8px;
}

.resource-bar .active {
    width: 22px;
    background-color: #fff;
}

.resource-bar svg {
    width: 16px;
    height: 16px;
}

/* Part navigator */
.navigator {
    flex: none;
    display: flex;
    flex-direction: column;
    width: 268px;
    padding: 0 6px 4px 4px;
    border-right: 1px solid #a5a5a5;
}

.navigator-title {
    display: flex;
    align-items: center;
    justify-content: space-between;
    height: 19px;
    padding: 0 4px 0 2px;
}

.navigator-title button {
    width: 9px;
    height: 7px;
    border: 1px solid #222;
    border-top-width: 2px;
}

.tree-wrap {
    flex: 1;
    min-height: 0;
    overflow: hidden;
    border: 1px solid #dedede;
    border-bottom: 3px double #a5a5a5;
}

.tree {
    width: 100%;
    table-layout: fixed;
    border-collapse: collapse;
}

.col-name { width: 132px; }
.col-flag { width: 16px; }
.col-comment { width: 67px; }

.tree th {
    height: 13px;
    padding: 0 4px;
    border-right: 1px solid #d5d5d5;
    background-color: #f1f1f1;
    font-weight: normal;
    text-align: left;
}

.sort {
    display: inline-block;
    margin-left: 11px;
    border: 3px solid transparent;
    border-top: none;
    border-bottom: 4px solid #111;
}

.tree tbody tr {
    height: 13px;
}

.tree tbody tr:nth-child(3n) {
    height: 14px;
}

.tree tbody tr:nth-child(even) {
    background-color: #f9f9f9;
}

.tree td {
    padding: 0;
    border-right: 1px solid #ececec;
    border-bottom: 1px solid #f0f0f0;
}

.tree td > svg {
    margin: 0 auto;
    width: 11px;
    height: 11px;
}

.node {
    display: flex;
    align-items: center;
    height: 12px;
    white-space: nowrap;
}

.node svg {
    width: 11px;
    height: 11px;
    margin-right: 1px;
}

.node .toggle {
    flex: none;
    width: 8px;
    height: 8px;
    margin: 0 2px;
}

.node .root {
    margin: 0 1px 0 6px;
    width: 5px;
    height: 1px;
    background-color: #bbb;
}

.trunk {
    flex: none;
    width: 18px;
    height: 13px;
}

.trunk.line {
    background: linear-gradient(#ddd, #ddd) 6px 0 / 1px 100% no-repeat;
}

.branch {
    flex: none;
    width: 6px;
    height: 13px;
    background: linear-gradient(#ccc, #ccc) 0 0 / 1px 100% no-repeat, linear-gradient(#ccc, #ccc) 0 6px / 100% 1px no-repeat;
}

.branch.last {
    background-size: 1px 50%, 100% 1px;
}

.node input {
    flex: none;
    appearance: none;
    width: 10px;
    height: 10px;
    margin: 0 1px;
    border: 1px solid #333;
    background: #fff url("data:image/svg+xml,%3Csvg xmlns='http://www.w3.org/2000/svg' viewBox='0 0 8 8'%3E%3Cpath d='M1 4l2 2 4-5' fill='none' stroke='%23111'/%3E%3C/svg%3E") center / 8px 8px no-repeat;
}

.pink label {
    color: #c050c4;
}

.tree .selected td {
    background-color: #8fc1d2;
}

.tree .selected td:first-child {
    background: linear-gradient(to right, #fff 47px, #8fc1d2 47px);
}

.tree .selected td:last-child {
    background-color: #fff;
}

.selected label {
    font-weight: bold;
}

.sections button {
    width: 100%;
    height: 16px;
    justify-content: flex-start;
    border-bottom: 1px solid #b5b5b5;
    color: #20657f;
    font-size: 9px;
}

.sections button::before {
    content: "";
    margin: 0 6px 0 7px;
    border: 3px solid transparent;
    border-left-color: #0c5273;
    border-right: none;
}

/* Document area */
.document {
    flex: 1;
    min-width: 0;
    display: flex;
    flex-direction: column;
}

.document-tabs {
    display: flex;
    height: 16px;
    border-bottom: 2px solid #00608a;
}

.document-tabs button {
    gap: 3px;
    padding: 0 13px 0 4px;
}

.document-tabs .active {
    gap: 4px;
    padding: 0 4px;
    background-color: #00608a;
    color: #e4f3f8;
}

.document-tabs svg {
    width: 11px;
    height: 11px;
}

.document-tabs .small {
    width: 7px;
    height: 7px;
}

.viewport {
    flex: 1;
    width: 100%;
    min-height: 0;
}

.solid-lines {
    stroke: #3e474b;
    stroke-width: 1;
    stroke-linejoin: round;
    fill: none;
    stroke-opacity: 0.7;
}

.csys-lines {
    fill: none;
    stroke: #8a7275;
    stroke-width: 1;
}

.axis-labels {
    fill: #444;
    font-size: 9px;
}

.axis-labels .z { fill: #26359d; }
.axis-labels .x { fill: #b8292c; }

.side-tools {
    flex: none;
    display: flex;
    flex-direction: column;
    justify-content: space-between;
    width: 24px;
    padding: 9px 3px 4px 2px;
    border-left: 1px solid #c5c5c5;
}

.side-list {
    display: flex;
    flex-direction: column;
    align-items: center;
    gap: 5px;
    padding-bottom: 7px;
    border-bottom: 1px solid #ddd;
}

.side-list svg {
    width: 16px;
    height: 16px;
}

.collapse {
    align-self: flex-start;
    margin-left: 2px;
    border: 2px solid transparent;
    border-right: 3px solid #222;
    border-left: none;
}

/* Status bar */
.status-bar {
    flex: none;
    display: flex;
    align-items: center;
    justify-content: space-between;
    height: 15px;
    padding: 0 36px 0 2px;
    border-top: 1px solid #a5a5a5;
    background-color: #fff;
    color: #111;
}

.status-bar button {
    gap: 3px;
}

.status-bar svg {
    width: 11px;
    height: 11px;
}
```
